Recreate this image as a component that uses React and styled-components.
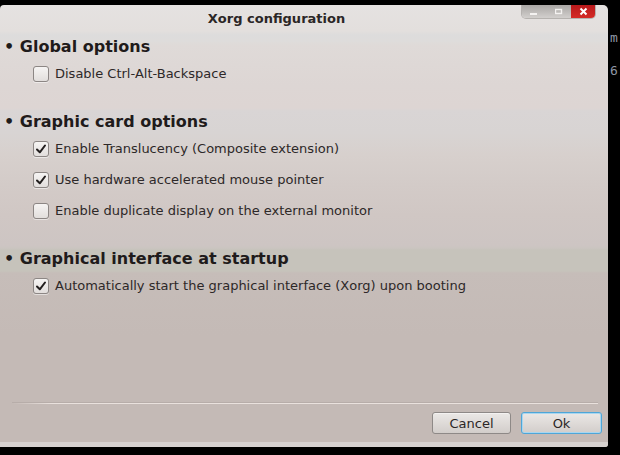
import React from "react";
import styled, {createGlobalStyle} from "styled-components";

const GlobalStyle = createGlobalStyle`
    html, body {
        margin: 0;
        padding: 0;
        background: #000;
        width: 620px;
        height: 455px;
        overflow: hidden;
        font-family: "DejaVu Sans", "Liberation Sans", sans-serif;
    }
`;

const Screen = styled.div`
    display: flex;
    align-items: flex-start;
    width: 620px;
    height: 455px;
`;

const Window = styled.div`
    display: flex;
    flex-direction: column;
    width: 610px;
    height: 442px;
    margin-top: 5px;
    border-radius: 4px 5px 3px 0;
    overflow: hidden;
    background: linear-gradient(to bottom,
        #e5e2e1 0px, #e3dfdd 26px, #dddcdc 30px, #dedcdb 36px, #dfdad8 40px,
        #ddd6d4 80px, #ddd5d3 103px, #d9d5d5 106px, #d8d4d3 128px, #d7d0cd 150px,
        #d3cbc8 180px, #d0c7c4 210px, #cdc5c3 240px, #cbc5c1 243px,
        #c6c3bb 245px, #c6c3bb 266px, #c6bdb9 268px, #c4bab6 330px, #c4bab6 442px);
`;

const TitleBar = styled.div`
    position: relative;
    height: 27px;
    display: flex;
    align-items: center;
    justify-content: center;
    padding-right: 55px;
    font-size: 13px;
    font-weight: bold;
    color: #2b2626;
`;

const WindowButtons = styled.div`
    position: absolute;
    top: 0;
    right: 13px;
    display: flex;
    height: 13px;
    border-radius: 0 0 4px 4px;
    overflow: hidden;
    box-shadow: 0 0 0 1px rgba(150,146,144,0.6);
`;

const WinButton = styled.div`
    width: ${p => p.$close ? 24 : 24.5}px;
    display: flex;
    align-items: center;
    justify-content: center;
    background: ${p => p.$close
        ? "linear-gradient(to bottom, #b8191b, #d42a26)"
        : "linear-gradient(to bottom, #a9a6a4, #d2cfcd)"};
`;

const Content = styled.div`
    flex: 1;
    display: flex;
    flex-direction: column;
    padding-top: 2px;
`;

const Section = styled.div`
    display: flex;
    flex-direction: column;
    margin-bottom: 20px;
`;

const SectionHeader = styled.div`
    height: 24px;
    display: flex;
    align-items: center;
    padding-left: 4px;
    font-size: 16px;
    font-weight: bold;
    color: #1f1b1b;
    white-space: pre;
`;

const OptionRow = styled.label`
    height: 31px;
    display: flex;
    align-items: center;
    gap: 6px;
    padding-left: 33px;
    font-size: 13px;
    color: #2d2828;
`;

const Box = styled.span`
    width: 14px;
    height: 14px;
    border: 1px solid #8c8684;
    border-radius: 3px;
    background: linear-gradient(to bottom, #f6f4f3, #e2dedc);
    box-shadow: 0 1px 0 rgba(255,255,255,0.5);
    display: flex;
    align-items: center;
    justify-content: center;
`;

const Footer = styled.div`
    display: flex;
    flex-direction: column;
`;

const Separator = styled.div`
    height: 1px;
    margin: 0 10px 0 12px;
    background: linear-gradient(to right, rgba(230,222,218,0) 0px, #e9e1dd 40px, #e9e1dd 100%);
    box-shadow: 0 -1px 0 rgba(160,150,146,0.35);
`;

const ButtonBar = styled.div`
    display: flex;
    justify-content: flex-end;
    gap: 10px;
    padding: 8px 6px 8px 0;
`;

const Button = styled.button`
    width: ${p => p.$width}px;
    height: 22px;
    border-radius: 3px;
    border: 1px solid ${p => p.$default ? "#4ea6d8" : "#8e8987"};
    box-shadow: ${p => p.$default ? "inset 0 0 0 1px #a9d6ef" : "inset 0 1px 0 #f4f2f1"};
    background: linear-gradient(to bottom, #ebe8e6, #d2cdca);
    font-family: "DejaVu Sans", "Liberation Sans", sans-serif;
    font-size: 13px;
    color: #2b2626;
    padding: 0;
`;

const BottomStrip = styled.div`
    height: 5px;
    background: #d6d1cf;
`;

const Terminal = styled.div`
    width: 10px;
    padding-top: 31px;
    padding-left: 2px;
    display: flex;
    flex-direction: column;
    gap: 19px;
    font-family: "DejaVu Sans Mono", monospace;
    font-size: 13px;
    line-height: 14px;
    color: #8e97a5;
    overflow: hidden;
`;

const sections = [
    {title: "Global options", options: [
        {label: "Disable Ctrl-Alt-Backspace", checked: false},
    ]},
    {title: "Graphic card options", options: [
        {label: "Enable Translucency (Composite extension)", checked: true},
        {label: "Use hardware accelerated mouse pointer", checked: true},
        {label: "Enable duplicate display on the external monitor", checked: false},
    ]},
    {title: "Graphical interface at startup", options: [
        {label: "Automatically start the graphical interface (Xorg) upon booting", checked: true},
    ]},
];

function Check() {
    return (
        <svg width="12" height="12" viewBox="0 0 12 12">
            <path d="M2 6.5 L4.8 9.3 L10 2.5" fill="none" stroke="#231f1f" strokeWidth="2" strokeLinecap="round" strokeLinejoin="round"/>
        </svg>
    );
}

function Option({label, checked}) {
    return (
        <OptionRow>
            <Box>{checked && <Check/>}</Box>
            {label}
        </OptionRow>
    );
}

export default function App() {
    return (
        <Screen>
            <GlobalStyle/>
            <Window>
                <TitleBar>
                    Xorg configuration
                    <WindowButtons>
                        <WinButton>
                            <svg width="8" height="8" viewBox="0 0 8 8"><rect x="0" y="5" width="7" height="2" fill="#f4f2f1"/></svg>
                        </WinButton>
                        <WinButton>
                            <svg width="8" height="8" viewBox="0 0 8 8"><rect x="0.5" y="1.5" width="6" height="4" fill="none" stroke="#f4f2f1" strokeWidth="1.4"/></svg>
                        </WinButton>
                        <WinButton $close>
                            <svg width="9" height="9" viewBox="0 0 9 9"><path d="M1.5 1.5 L7.5 7.5 M7.5 1.5 L1.5 7.5" stroke="#fff" strokeWidth="2"/></svg>
                        </WinButton>
                    </WindowButtons>
                </TitleBar>
                <Content>
                    {sections.map(section => (
                        <Section key={section.title}>
                            <SectionHeader>{"• " + section.title}</SectionHeader>
                            {section.options.map(option => (
                                <Option key={option.label} label={option.label} checked={option.checked}/>
                            ))}
                        </Section>
                    ))}
                </Content>
                <Footer>
                    <Separator/>
                    <ButtonBar>
                        <Button $width={79}>Cancel</Button>
                        <Button $width={81} $default>Ok</Button>
                    </ButtonBar>
                    <BottomStrip/>
                </Footer>
            </Window>
            <Terminal>
                <span>m</span>
                <span>6</span>
            </Terminal>
        </Screen>
    );
}
